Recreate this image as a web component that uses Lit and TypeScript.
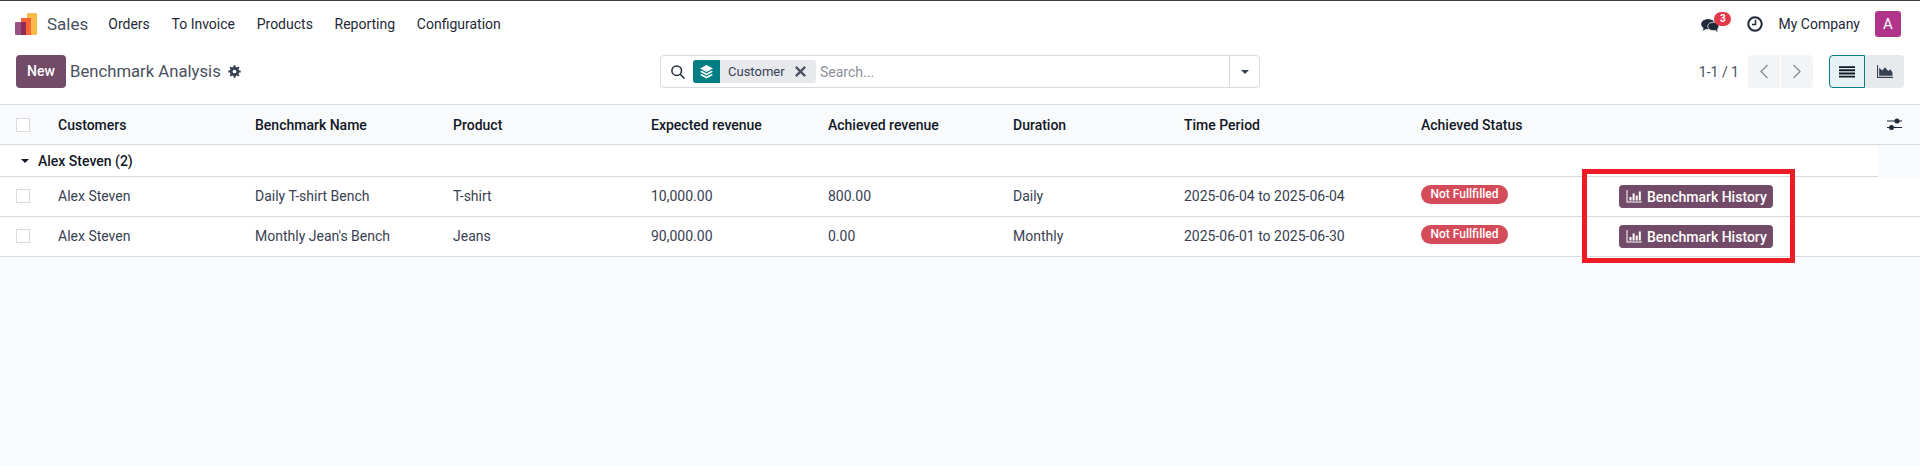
import { LitElement, html, css, svg } from 'lit';
import { customElement } from 'lit/decorators.js';

const columns = ['Customers', 'Benchmark Name', 'Product', 'Expected revenue', 'Achieved revenue', 'Duration', 'Time Period', 'Achieved Status'];
const widths = [50, 197, 198, 198, 177, 185, 171, 237, 167, 298, 42];

const rows = [
  ['Alex Steven', 'Daily T-shirt Bench', 'T-shirt', '10,000.00', '800.00', 'Daily', '2025-06-04 to 2025-06-04'],
  ['Alex Steven', "Monthly Jean's Bench", 'Jeans', '90,000.00', '0.00', 'Monthly', '2025-06-01 to 2025-06-30'],
];

const gear = svg`<svg class="gear" viewBox="0 0 14 14"><g stroke="#374151" stroke-width="2.2"><path d="M7 .3v13.4M.3 7h13.400M2.300 2.300l9.400 9.400M11.700 2.300l-9.400 9.400"/></g><circle cx="7" cy="7" r="5" fill="#374151"/><circle cx="7" cy="7" r="2" fill="#fff"/></svg>`;

const barChart = svg`<svg class="bars" viewBox="0 0 16 13" fill="#fff"><path d="M.5 0h1v11.500H16v1H.5z"/><path d="M3.500 7h2v3.500h-2zM6.600 3.500h2v7h-2zM9.700 5.500h2v5h-2zM12.800 1.500h2v9h-2z"/></svg>`;

@customElement('app-root')
export class AppRoot extends LitElement {
  static styles = css`
    :host {
      display: block;
      position: relative;
      height: 466px;
      background: #f9fafb;
      font-family: Roboto, 'Liberation Sans', sans-serif;
      font-size: 14px;
      color: #374151;
      overflow: hidden;
    }
    .navbar {
      display: flex;
      align-items: center;
      height: 47px;
      padding: 0 19px 0 15px;
      background: #fff;
      border-top: 1px solid #3e3b47;
      box-sizing: border-box;
      color: #1f2937;
    }
    .logo {
      width: 23px;
      height: 23px;
      margin-right: 9px;
    }
    .app-name {
      font-size: 17px;
      color: #495160;
      margin-right: 20px;
    }
    .menu {
      display: flex;
      gap: 21.7px;
    }
    .systray {
      margin-left: auto;
      display: flex;
      align-items: center;
    }
    .chat {
      position: relative;
      width: 18px;
      height: 15px;
      margin: 2px 28px 0 0;
    }
    .chat svg {
      width: 18px;
      height: 15px;
      display: block;
    }
    .badge {
      position: absolute;
      left: 13px;
      top: -6px;
      width: 17px;
      height: 14px;
      border-radius: 8px;
      background: #e5384b;
      color: #fff;
      font-size: 10px;
      font-weight: 700;
      line-height: 14px;
      text-align: center;
    }
    .clock {
      width: 16px;
      height: 16px;
      margin-right: 15px;
    }
    .avatar {
      width: 26px;
      height: 26px;
      margin-left: 15px;
      border-radius: 3px;
      background: #b0358a;
      color: #fff;
      font-size: 15px;
      line-height: 26px;
      text-align: center;
    }
    .panel {
      display: grid;
      grid-template-columns: 644px 600px 1fr;
      align-items: center;
      background: #fff;
      height: 57px;
      padding: 8px 16px 16px;
      box-sizing: border-box;
    }
    .panel-left,
    .panel-right {
      display: flex;
      align-items: center;
    }
    .panel-right {
      justify-content: flex-end;
    }
    .new-btn {
      width: 50px;
      height: 33px;
      border-radius: 4px;
      background: #714b67;
      color: #fff;
      font-weight: 500;
      font-size: 14px;
      line-height: 33px;
      text-align: center;
    }
    .title {
      margin-left: 4px;
      font-size: 16.7px;
      color: #495160;
    }
    .gear {
      width: 13px;
      height: 13px;
      margin-left: 7px;
    }
    .search {
      display: flex;
      align-items: center;
      height: 33px;
      box-sizing: border-box;
      border: 1px solid #d8dadd;
      border-radius: 4px;
      background: #fff;
    }
    .search-icon {
      width: 14px;
      height: 14px;
      margin: 0 8px 0 10px;
    }
    .chip {
      display: flex;
      align-items: center;
      width: 123px;
      height: 23px;
      border-radius: 3px;
      background: #e7e9ed;
      overflow: hidden;
      font-size: 13px;
    }
    .chip-icon {
      display: flex;
      align-items: center;
      justify-content: center;
      width: 27px;
      height: 23px;
      background: #017e84;
      margin-right: 8px;
    }
    .chip-icon svg {
      width: 13px;
      height: 14px;
    }
    .chip-x {
      width: 11px;
      height: 11px;
      margin-left: 10px;
    }
    .placeholder {
      flex: 1;
      margin-left: 4px;
      color: #8b909a;
    }
    .drop {
      display: flex;
      align-items: center;
      justify-content: center;
      width: 30px;
      height: 100%;
      box-sizing: border-box;
      border-left: 1px solid #d8dadd;
    }
    .caret {
      width: 0;
      height: 0;
      border: 4px solid transparent;
      border-top-color: #374151;
      border-bottom: 0;
    }
    .pager {
      margin-right: 9px;
      color: #495160;
    }
    .pager-btn {
      display: flex;
      align-items: center;
      justify-content: center;
      width: 32px;
      height: 33px;
      background: #f3f4f6;
    }
    .pager-btn svg {
      width: 10px;
      height: 15px;
    }
    .pager-btn.prev {
      margin-right: 1px;
      border-radius: 4px 0 0 4px;
    }
    .pager-btn.next {
      margin-right: 16px;
      border-radius: 0 4px 4px 0;
    }
    .view {
      display: flex;
      align-items: center;
      justify-content: center;
      box-sizing: border-box;
      height: 33px;
      width: 39px;
      background: #e7e9ed;
      border-radius: 0 4px 4px 0;
    }
    .view.active {
      width: 36px;
      background: #e6f2f3;
      border: 1px solid #017e84;
      border-radius: 4px 0 0 4px;
    }
    .view svg {
      width: 16px;
      height: 13px;
    }
    table {
      border-collapse: collapse;
      table-layout: fixed;
      width: 1920px;
    }
    th,
    td {
      padding: 0 0 0 8px;
      text-align: left;
      white-space: nowrap;
      box-sizing: border-box;
    }
    th {
      height: 40px;
      font-weight: 500;
      color: #111827;
      background: #f9fafb;
      border-top: 1px solid #d8dadd;
      border-bottom: 1px solid #d8dadd;
    }
    td {
      background: #fff;
    }
    tr.group td {
      height: 32px;
      font-weight: 500;
      color: #111827;
      border-bottom: 1px solid #d8dadd;
    }
    tr.group td.filler {
      background: #f9fafb;
      border-bottom: 0;
    }
    .group-label {
      display: flex;
      align-items: center;
      gap: 7px;
      padding-left: 13px;
    }
    .group-label .caret {
      border-top-color: #111827;
      margin-right: 2px;
    }
    tr.row td {
      height: 40px;
      padding-bottom: 2px;
      border-bottom: 1px solid #d8dadd;
    }
    .check-cell {
      padding-left: 16px;
    }
    .check {
      display: block;
      width: 14px;
      height: 14px;
      box-sizing: border-box;
      border: 1px solid #d8dadd;
      background: #fff;
    }
    .sliders {
      display: block;
      width: 15px;
      height: 13px;
      margin-left: 1px;
    }
    .status {
      display: inline-block;
      position: relative;
      top: -1px;
      width: 87px;
      height: 19px;
      border-radius: 10px;
      background: #d44c59;
      color: #fff;
      font-size: 12px;
      font-weight: 500;
      line-height: 19px;
      text-align: center;
    }
    .history {
      display: flex;
      align-items: center;
      width: 154px;
      height: 23px;
      margin: 2px 0 0 31px;
      padding-left: 7px;
      box-sizing: border-box;
      border-radius: 4px;
      background: #714b67;
      color: #fff;
      font-weight: 500;
      font-size: 14px;
    }
    .bars {
      width: 16px;
      height: 13px;
      margin-right: 5px;
    }
    .highlight {
      position: absolute;
      left: 1582px;
      top: 169px;
      width: 213px;
      height: 94px;
      box-sizing: border-box;
      border: 5px solid #ed1c24;
    }
  `;

  renderNavbar() {
    return html`
      <header class="navbar">
        <svg class="logo" viewBox="0 0 23 23">
          <rect x="12" y="0" width="10" height="22" rx="1" fill="#fbb945" />
          <rect x="6" y="5" width="10" height="17" fill="#f9653a" />
          <rect x="0" y="9" width="11" height="13" rx="1" fill="#985184" />
          <rect x="6" y="9" width="5" height="13" fill="#8f2a52" />
        </svg>
        <span class="app-name">Sales</span>
        <nav class="menu">
          <span>Orders</span><span>To Invoice</span><span>Products</span><span>Reporting</span><span>Configuration</span>
        </nav>
        <div class="systray">
          <div class="chat">
            <svg viewBox="0 0 19 16" fill="#1f2937">
              <ellipse cx="7.500" cy="6.500" rx="7.500" ry="5.500" />
              <path d="M3 10l-1.500 3.500L7 11z" />
              <ellipse cx="13" cy="9" rx="6" ry="4.500" stroke="#fff" stroke-width=".8" />
              <path d="M15 12.500l2.500 3-.5-4z" />
            </svg>
            <span class="badge">3</span>
          </div>
          <svg class="clock" viewBox="0 0 16 16" fill="none" stroke="#1f2937">
            <circle cx="8" cy="8" r="6.700" stroke-width="2" />
            <path d="M8.500 3.800v4.700H5" stroke-width="1.500" />
          </svg>
          <span>My Company</span>
          <div class="avatar">A</div>
        </div>
      </header>
    `;
  }

  renderPanel() {
    return html`
      <section class="panel">
        <div class="panel-left">
          <div class="new-btn">New</div>
          <span class="title">Benchmark Analysis</span>
          ${gear}
        </div>
        <div class="search">
          <svg class="search-icon" viewBox="0 0 14 14" fill="none" stroke="#1f2937" stroke-width="1.500">
            <circle cx="5.700" cy="5.700" r="4.800" />
            <path d="M9.200 9.200l4.300 4.300" />
          </svg>
          <div class="chip">
            <span class="chip-icon">
              <svg viewBox="0 0 13 14" fill="#fff">
                <path d="M6.500 0l6.500 3.500-6.500 3.500L0 3.500z" />
                <path d="M1.700 5.800l4.800 2.600 4.800-2.600 1.700.9-6.500 3.500L0 6.700z" />
                <path d="M1.700 9l4.800 2.600L11.300 9l1.700.9L6.500 13.400 0 9.900z" />
              </svg>
            </span>
            <span>Customer</span>
            <svg class="chip-x" viewBox="0 0 9 9" stroke="#495160" stroke-width="1.800">
              <path d="M.7.700l7.600 7.600M8.300.700L.7 8.300" />
            </svg>
          </div>
          <span class="placeholder">Search...</span>
          <span class="drop"><span class="caret"></span></span>
        </div>
        <div class="panel-right">
          <span class="pager">1-1 / 1</span>
          <span class="pager-btn prev">
            <svg viewBox="0 0 10 15" fill="none" stroke="#8b909a" stroke-width="1.400"><path d="M8.500 1L2 7.500 8.500 14" /></svg>
          </span>
          <span class="pager-btn next">
            <svg viewBox="0 0 10 15" fill="none" stroke="#8b909a" stroke-width="1.400"><path d="M1.500 1L8 7.500 1.500 14" /></svg>
          </span>
          <span class="view active">
            <svg viewBox="0 0 15 12" fill="#111827"><path d="M0 1h15v1.700H0zM0 4h15v1.700H0zM0 7h15v1.700H0zM0 10h15v1.700H0z" /></svg>
          </span>
          <span class="view">
            <svg viewBox="0 0 15 12" fill="#374151">
              <path d="M0 0h1v11h14v1H0z" />
              <path d="M2 10V2.500l3 2.500 2.500-3 3 3.500 2-1.500 2 3V10z" />
            </svg>
          </span>
        </div>
      </section>
    `;
  }

  renderTable() {
    return html`
      <table>
        <colgroup>${widths.map((w) => html`<col style="width:${w}px" />`)}</colgroup>
        <thead>
          <tr>
            <th class="check-cell"><span class="check"></span></th>
            ${columns.map((c) => html`<th>${c}</th>`)}
            <th></th>
            <th>
              <svg class="sliders" viewBox="0 0 15 13" fill="#1f2937">
                <path d="M0 2.500h15v1H0zM0 9h15v1H0z" />
                <circle cx="10" cy="3" r="2.500" />
                <circle cx="4.500" cy="9.500" r="2.500" />
              </svg>
            </th>
          </tr>
        </thead>
        <tbody>
          <tr class="group">
            <td colspan="10"><div class="group-label"><span class="caret"></span><span>Alex Steven (2)</span></div></td>
            <td class="filler"></td>
          </tr>
          ${rows.map(
            (r) => html`
              <tr class="row">
                <td class="check-cell"><span class="check"></span></td>
                ${r.map((v) => html`<td>${v}</td>`)}
                <td><span class="status">Not Fullfilled</span></td>
                <td colspan="2"><div class="history">${barChart}Benchmark History</div></td>
              </tr>
            `
          )}
        </tbody>
      </table>
    `;
  }

  render() {
    return html`
      ${this.renderNavbar()} ${this.renderPanel()} ${this.renderTable()}
      <div class="highlight"></div>
    `;
  }
}
